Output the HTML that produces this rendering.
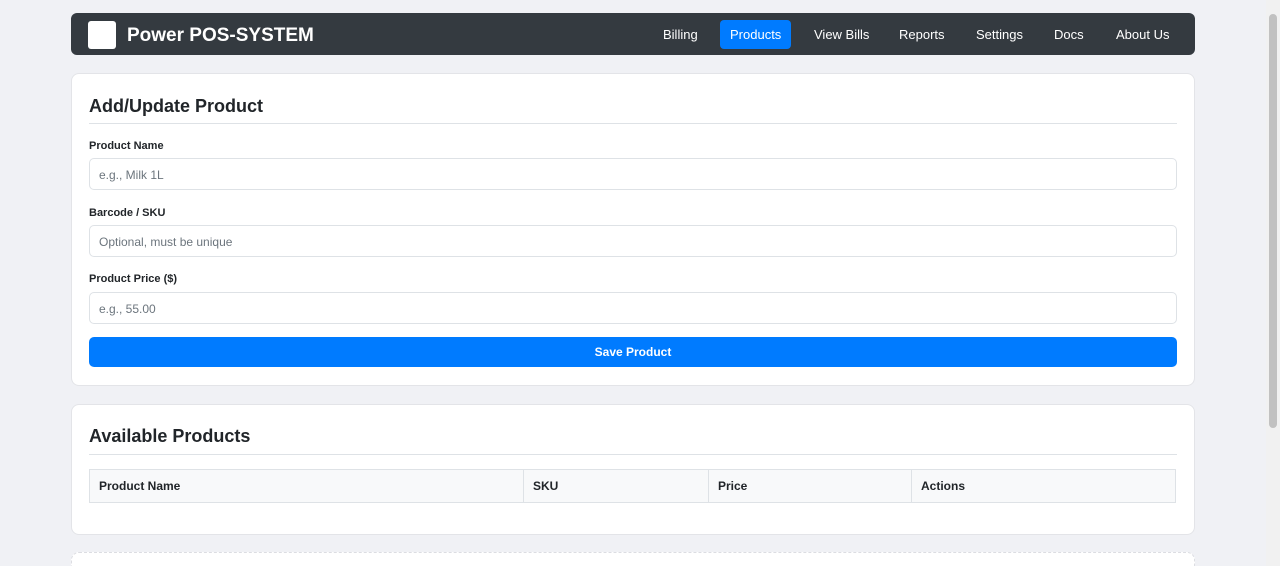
<!DOCTYPE html>
<html><head><style>
*{box-sizing:border-box;margin:0;padding:0}
html,body{width:1280px;height:566px;overflow:hidden}
body{background:#f0f1f5;font-family:"Liberation Sans",sans-serif;color:#212529;position:relative}
.sb{position:absolute;right:0;top:0;width:14px;height:566px;background:#f1f1f1}
.sb .th{position:absolute;left:3px;top:14px;width:8px;height:414px;background:#c1c1c1;border-radius:4px}
.nav{position:absolute;left:71px;top:13px;width:1124px;height:42px;background:#343a40;border-radius:6px}
.logo{position:absolute;left:17px;top:8px;width:28px;height:28px;background:#fff;border-radius:3px}
.title{position:absolute;left:56px;top:12px;color:#fff;font-weight:bold;font-size:19px}
.nav a{position:absolute;top:7px;height:29px;line-height:29px;color:#fff;font-size:13px;text-decoration:none;padding:0 10px;border-radius:4px}
.card{position:absolute;left:71px;width:1124px;background:#fff;border:1px solid #e3e4e8;border-radius:8px}
h2{position:absolute;left:17px;font-size:18px;font-weight:bold}
.hr{position:absolute;left:17px;right:17px;height:1px;background:#dee2e6}
label{position:absolute;left:17px;font-size:11px;font-weight:bold}
.in{position:absolute;left:17px;right:17px;height:32px;border:1px solid #dee2e6;border-radius:5px;font-size:12px;color:#6c757d;padding:9px 9px}
.btn{position:absolute;left:17px;right:17px;top:263px;height:30px;background:#007bff;border-radius:5px;color:#fff;font-weight:bold;font-size:12px;text-align:center;line-height:30px}
table{position:absolute;left:17px;top:64px;width:1087px;border-collapse:collapse;font-size:12px}
th{background:#f8f9fa;border:1px solid #dee2e6;height:33px;text-align:left;padding:0 9px;font-weight:bold}
</style></head><body>
<div class="nav"><div class="logo"></div><div class="title">Power POS-SYSTEM</div>
<a style="left:582px">Billing</a>
<a style="left:649px;background:#007bff">Products</a>
<a style="left:733px">View Bills</a>
<a style="left:818px">Reports</a>
<a style="left:895px">Settings</a>
<a style="left:973px">Docs</a>
<a style="left:1035px">About Us</a>
</div>
<div class="card" style="top:73px;height:313px">
<h2 style="top:22px">Add/Update Product</h2><div class="hr" style="top:49px"></div>
<label style="top:66px">Product Name</label><div class="in" style="top:84px">e.g., Milk 1L</div>
<label style="top:133px">Barcode / SKU</label><div class="in" style="top:151px">Optional, must be unique</div>
<label style="top:199px">Product Price ($)</label><div class="in" style="top:218px">e.g., 55.00</div>
<div class="btn">Save Product</div>
</div>
<div class="card" style="top:404px;height:131px">
<h2 style="top:21px">Available Products</h2><div class="hr" style="top:49px"></div>
<table><tr><th style="width:434px">Product Name</th><th style="width:185px">SKU</th><th style="width:203px">Price</th><th>Actions</th></tr></table>
</div>
<div class="card" style="top:552px;height:40px;border:1px dashed #dcdde2"></div>
<div class="sb"><div class="th"></div></div>
</body></html>
